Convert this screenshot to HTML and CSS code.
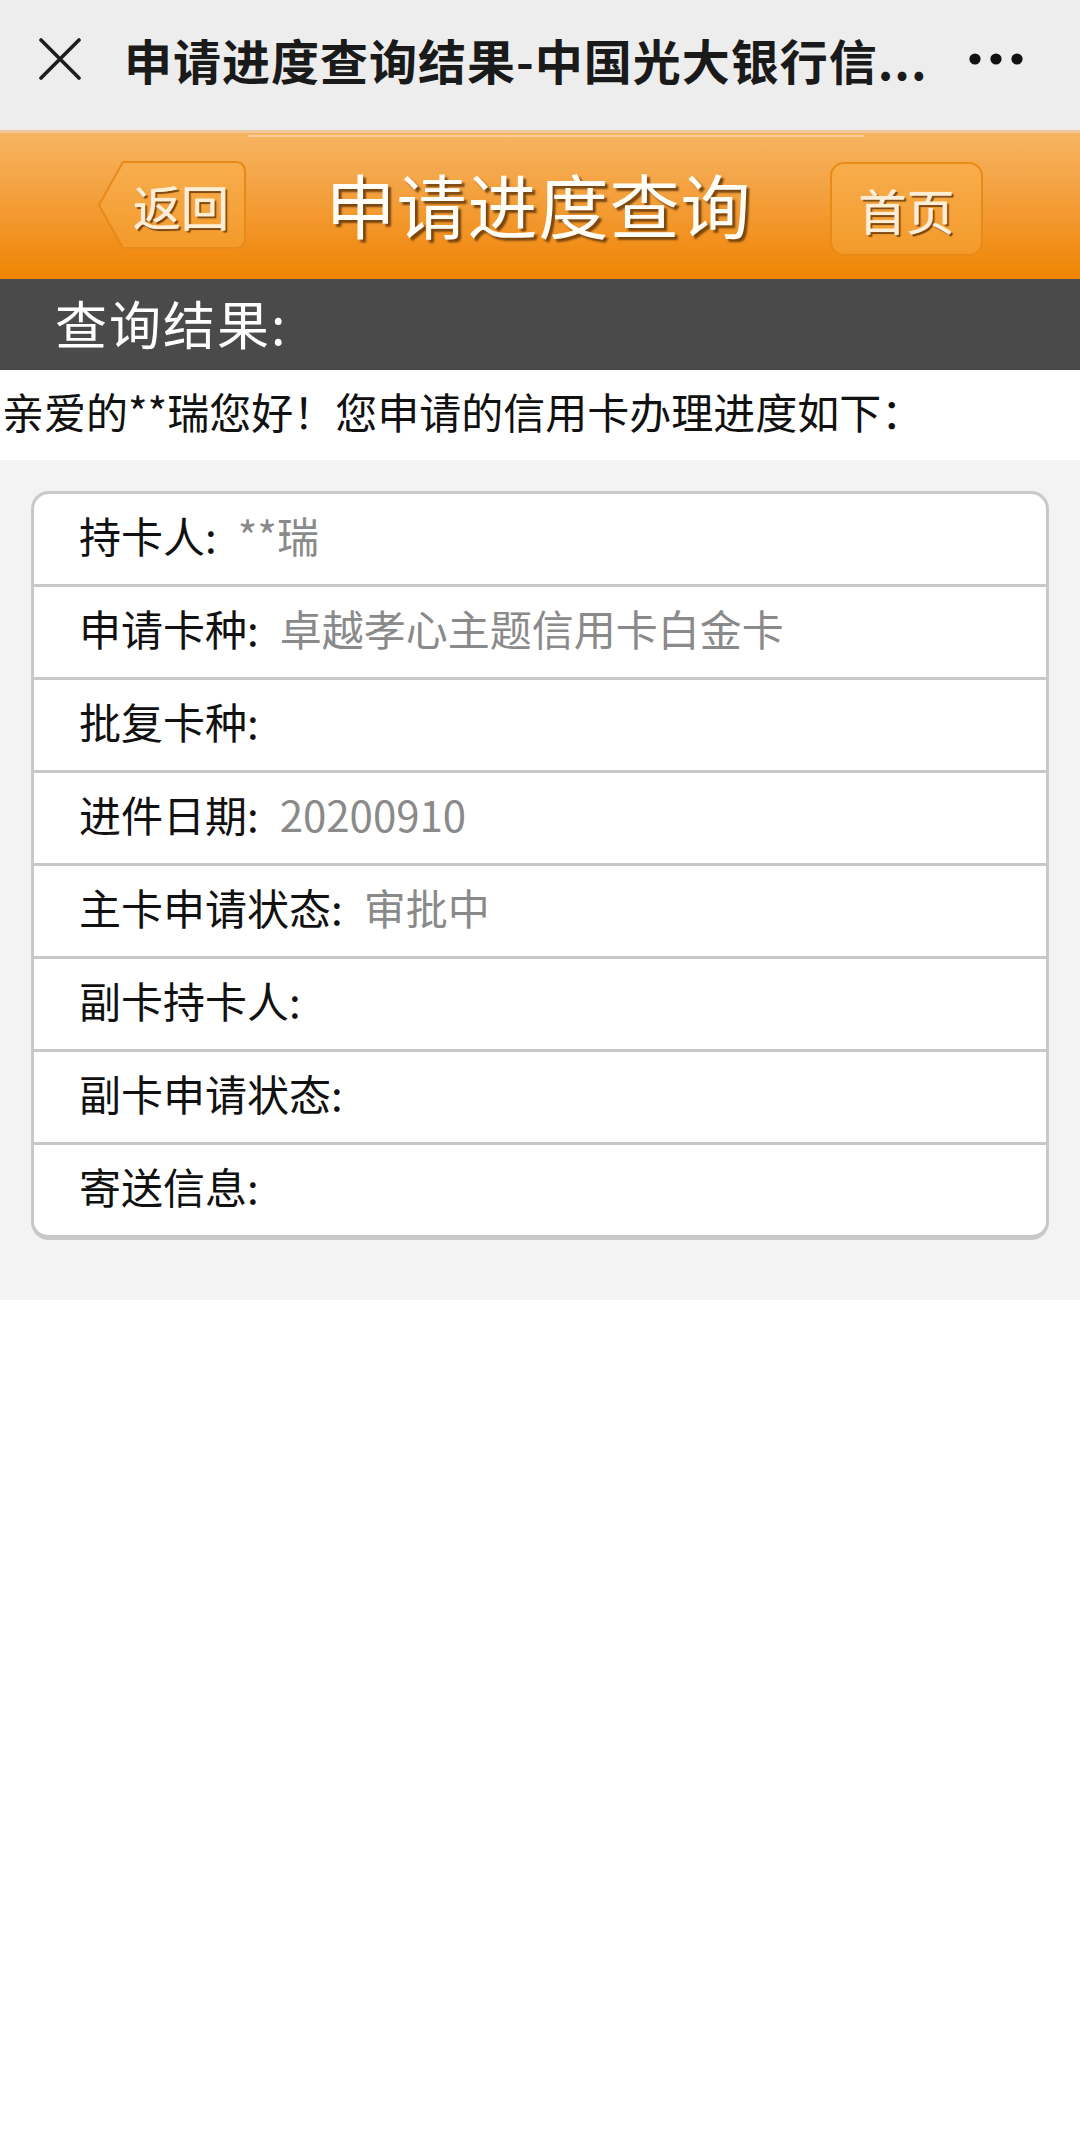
FILE: index.html
```html
<!DOCTYPE html>
<html lang="zh-CN">
  <head>
    <meta charset="UTF-8" />
    <title>申请进度查询结果-中国光大银行信用卡</title>
    <meta name="viewport" content="width=device-width, initial-scale=1.0" />
    <link rel="stylesheet" href="styles.css">
  </head>
  <body>
    <div class="topbar">
      <svg class="close-icon" width="42" height="42" viewBox="0 0 42 42">
        <path d="M2 2 L40 40 M40 2 L2 40" stroke="#1e1e1e" stroke-width="3.6" stroke-linecap="round" />
      </svg>
      <div class="topbar-title">申请进度查询结果-中国光大银行信...</div>
      <svg class="more-icon" width="54" height="14" viewBox="0 0 54 14">
        <circle cx="6" cy="7" r="5.6" fill="#111" />
        <circle cx="27" cy="7" r="5.6" fill="#111" />
        <circle cx="48" cy="7" r="5.6" fill="#111" />
      </svg>
    </div>

    <header class="header">
      <a class="btn btn-back">
        <svg class="btn-bg" width="150" height="90" viewBox="0 0 150 90">
          <defs>
            <linearGradient id="backFill" x1="0" y1="0" x2="0" y2="1">
              <stop offset="0" stop-color="#f8ae4f" />
              <stop offset="1" stop-color="#f39a2a" />
            </linearGradient>
          </defs>
          <path d="M26 2 H138 Q148 2 148 12 V78 Q148 88 138 88 H26 L2 45 Z" fill="url(#backFill)" stroke="#e88a18" stroke-width="2" />
        </svg>
        <span class="btn-text">返回</span>
      </a>
      <h1 class="header-title">申请进度查询</h1>
      <a class="btn btn-home">
        <span class="btn-text">首页</span>
      </a>
    </header>

    <div class="section-bar">查询结果:</div>

    <p class="greeting">亲爱的**瑞您好！您申请的信用卡办理进度如下：</p>

    <main class="result">
      <div class="card">
        <div class="row"><span class="label">持卡人:</span><span class="value">**瑞</span></div>
        <div class="row"><span class="label">申请卡种:</span><span class="value">卓越孝心主题信用卡白金卡</span></div>
        <div class="row"><span class="label">批复卡种:</span><span class="value"></span></div>
        <div class="row"><span class="label">进件日期:</span><span class="value">20200910</span></div>
        <div class="row"><span class="label">主卡申请状态:</span><span class="value">审批中</span></div>
        <div class="row"><span class="label">副卡持卡人:</span><span class="value"></span></div>
        <div class="row"><span class="label">副卡申请状态:</span><span class="value"></span></div>
        <div class="row"><span class="label">寄送信息:</span><span class="value"></span></div>
      </div>
    </main>
  </body>
</html>
```

FILE: styles.css
```css
body {
  margin: 0;
  font-family: "Noto Sans CJK SC", "Noto Sans", sans-serif;
  background-color: #fff;
  color: #111;
}

.topbar {
  height: 130px;
  box-sizing: border-box;
  padding: 0 0 12px 39px;
  background-color: #ededed;
  display: flex;
  align-items: center;
}

.close-icon {
  flex: none;
}

.topbar-title {
  margin-left: 43px;
  font-size: 48px;
  font-weight: 700;
  letter-spacing: 1px;
  color: #1a1a1a;
  white-space: nowrap;
  line-height: 1;
}

.more-icon {
  margin-left: auto;
  margin-right: 57px;
  flex: none;
}

.header {
  height: 149px;
  box-sizing: border-box;
  padding: 0 97px;
  display: flex;
  align-items: center;
  justify-content: space-between;
  border-top: 3px solid #efc89c;
  background:
    linear-gradient(to right, transparent 23%, rgba(255, 240, 220, 0.45) 23%, rgba(255, 240, 220, 0.45) 80%, transparent 80%) no-repeat center 2px / 100% 2px,
    linear-gradient(to bottom, #f7b462 0%, #f4a444 35%, #f29222 70%, #ef8502 100%);
}

.btn {
  position: relative;
  display: flex;
  align-items: center;
  justify-content: center;
  box-sizing: border-box;
}

.btn-back {
  width: 150px;
  height: 90px;
  padding-left: 18px;
  margin-top: -2px;
}

.btn-bg {
  position: absolute;
  left: 0;
  top: 0;
}

.btn-home {
  width: 153px;
  height: 94px;
  margin-top: 6px;
  border: 2px solid #e88a18;
  border-radius: 14px;
  background: linear-gradient(to bottom, #f8ad4c, #f39a2a);
}

.btn-text {
  position: relative;
  font-size: 48px;
  font-weight: 400;
  line-height: 1;
  color: #fdeed6;
  text-shadow: 0 0 1px #fdeed6, 2px 2px 1px rgba(105, 55, 8, 0.9);
}

.header-title {
  margin: 0 0 4px;
  font-size: 70px;
  font-weight: 400;
  letter-spacing: 1px;
  line-height: 1;
  color: #fffdf6;
  text-shadow: 3px 3px 2px rgba(110, 62, 12, 0.9);
}

.section-bar {
  height: 91px;
  box-sizing: border-box;
  padding: 0 0 4px 55px;
  display: flex;
  align-items: center;
  background-color: #4a4a4a;
  color: #fff;
  font-size: 52px;
  letter-spacing: 2px;
  line-height: 1;
}

.greeting {
  margin: 0;
  height: 90px;
  box-sizing: border-box;
  padding: 0 0 8px 2px;
  display: flex;
  align-items: center;
  font-size: 42px;
  line-height: 1;
  color: #111;
}

.result {
  background-color: #f3f3f3;
  padding: 31px 31px 60px;
}

.card {
  background-color: #fff;
  border: 3px solid #c8c8c8;
  border-bottom-width: 5px;
  border-radius: 18px;
  overflow: hidden;
}

.row {
  height: 90px;
  box-sizing: border-box;
  display: flex;
  align-items: center;
  padding: 0 0 8px 45px;
  font-size: 42px;
  line-height: 1;
}

.row + .row {
  height: 93px;
  border-top: 3px solid #c8c8c8;
}

.label {
  color: #111;
}

.value {
  margin-left: 21px;
  color: #8a8a8a;
}
```
